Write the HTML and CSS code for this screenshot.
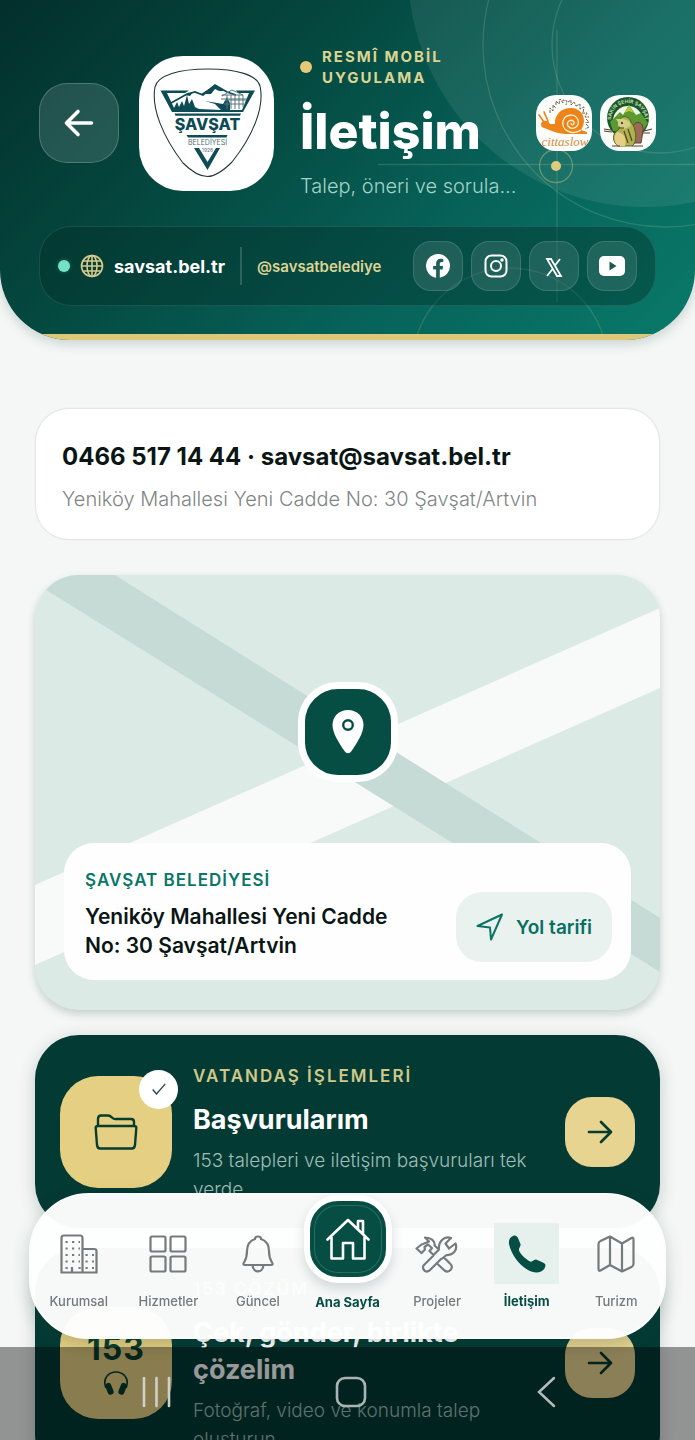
FILE: index.html
```html
<!DOCTYPE html>
<html lang="tr">
<head>
<meta charset="utf-8">
<meta name="viewport" content="width=device-width, initial-scale=1">
<title>İletişim – Şavşat Belediyesi</title>
<link rel="stylesheet" href="styles.css">
</head>
<body>
<div class="app">
  <header class="header">
    <svg class="header-art" width="320" height="338" viewBox="375 0 320 338" fill="none" aria-hidden="true">
      <circle cx="645" cy="-30" r="237" fill="#fff" fill-opacity=".08"/>
      <g stroke="#cfe0a8" stroke-opacity=".17" stroke-width="1.3">
        <circle cx="665" cy="45" r="182"/>
        <circle cx="660" cy="45" r="108"/>
        <circle cx="510" cy="366" r="98"/>
        <path d="M378 164.500H695M557 30V302"/>
      </g>
      <circle cx="556" cy="166" r="16.500" stroke="#dccb7f" stroke-opacity=".4" stroke-width="1.300"/>
      <circle cx="556" cy="166" r="5" fill="#e0cb7c"/>
    </svg>
    <div class="header-top">
      <button class="back" type="button" aria-label="Geri">
        <svg width="32" height="32" viewBox="0 0 32 32" fill="none" stroke="#fff" stroke-width="3.6" stroke-linecap="round" stroke-linejoin="round"><path d="M28.500 16H4M15 4.500 3.500 16 15 27.500"/></svg>
      </button>
      <div class="crest">
        <svg width="135" height="135" viewBox="4 5 135 135" role="img" aria-label="Şavşat Belediyesi">
          <path d="M73 18C102 18 122 24 125 35C130 57 117 86 97 111C87 121 79 125.500 72.500 125.500C66 125.500 57 121 48 112C28 86 16 57 20 36C23 24 44 18 73 18Z" fill="#fff" stroke="#20393c" stroke-width="1.100"/>
          <path d="M25.500 39.500H54L50 42H32L40 59H107L114 42H103L101 39.500H120L108 61H37Z" fill="#0d4b55"/>
          <path d="M36 52 52 43 60 41 68 44 80 34 92 41 101 44" fill="none" stroke="#0d4b55" stroke-width="1.800"/>
          <path d="M66 43 80 34 89 40 84 40 80 38 76 43ZM50 44 58 41 55 45ZM36 59V54L39 57 42 51 44 56 47 50 49 55 52 44 54 53 57 48 60 56 64 58 86 59 80 53 70 50 88 53 92 46 95 52 95 60H38Z" fill="#0d4b55"/>
          <g fill="none" stroke="#58797d" stroke-width="1"><path d="M87 45 97 39 108 44H87ZM92 44V58M96 44V58M100 44V58M104 44V58M108 44V56M90 49H111M89 53H109M86 48H112"/></g>
          <path d="M39.500 62.500H106L105 64.800H40.500ZM51.500 84H92.500L91.300 86.500H53Z" fill="#0d4b55"/>
          <text class="crest-name" x="72.500" y="78.500" text-anchor="middle">ŞAVŞAT</text>
          <text class="crest-sub" x="72.500" y="93.500" text-anchor="middle">BELEDİYESİ</text>
          <text class="crest-year" x="72.500" y="100.500" text-anchor="middle">1926</text>
          <path d="M59 97H64L72.500 111 81 97H85L72.500 119Z" fill="#0d4b55"/>
        </svg>
      </div>
      <div class="heading">
        <p class="eyebrow"><span class="gold-dot"></span><span>RESMÎ MOBİL UYGULAMA</span></p>
        <h1>İletişim</h1>
        <p class="lead">Talep, öneri ve sorula...</p>
      </div>
      <div class="partners">
        <span class="partner">
          <svg width="56" height="56" viewBox="0 0 56 56" role="img" aria-label="Cittaslow">
            <g fill="none" stroke="#765b45" stroke-width="1"><path d="M14 18V13L17 16V10L20 13M20 10V6L23 9 24 4 27 8V5L31 6 30 10M32 7 35 5V10L38 7 40 11M40 11 44 9V14L48 12 47 18M46 18H51L49 22H53M50 24 53 27 49 28M50 29 53 32 49 34" stroke-dasharray="3 1"/></g>
            <path d="M8 27 3 20M12 26 8 17" stroke="#ee8418" stroke-width="1.700" stroke-linecap="round"/>
            <path d="M6 27C8 25 12 25 14 29L19 29C18 19 27 12 36 13C48 14 51 27 45 35L51 37V39H30C23 39 16 36 8 33C5 32 4 29 6 27Z" fill="#ee8418"/>
            <path d="M45 35C36 41 25 35 27 26C29 19 39 18 42 25C44 32 36 36 32 31C30 27 35 23 38 27C39 30 35 31 35 28" fill="none" stroke="#fff0d7" stroke-width="1.300"/>
            <text class="cittaslow" x="29" y="51" text-anchor="middle">cittaslow</text>
          </svg>
        </span>
        <span class="partner">
          <svg width="56" height="56" viewBox="0 0 56 56" role="img" aria-label="Sakin şehir">
            <circle cx="28" cy="23" r="21" fill="#17572b"/>
            <circle cx="28" cy="26" r="15" fill="#f1f6e6"/>
            <path d="M10 27 20 17 23 20 29 10 36 20 41 18 48 28 43 36H13Z" fill="#5a9a31"/>
            <path d="M24 18 29 10 34 18 29 16Z" fill="#b7c943"/>
            <path id="badge-arc" d="M11 25A17 17 0 0 1 45 25" fill="none"/>
            <text class="badge-text"><textPath href="#badge-arc" startOffset="50%" text-anchor="middle">SAKİN ŞEHİR ŞAVŞAT</textPath></text>
            <path d="M33 31C37 24 44 28 43 36L41 48H30Z" fill="#9d6b55" stroke="#5b4234"/>
            <path d="M20 26C20 20 29 20 31 27 36 32 38 48 32 51H18C12 47 12 38 18 35L20 32Z" fill="#aeb34d" stroke="#556126"/>
            <path d="M17 37C13 42 14 49 19 51H25C27 43 24 38 17 37Z" fill="#e4cf84"/>
            <path d="M18 27 16 24H23L29 26 31 31 24 34 18 31Z" fill="#d2cf86"/>
            <circle cx="22" cy="28" r="1" fill="#222"/>
            <path d="M4 34 11 35M4 36 12 37M44 36 52 34M43 38 50 38M12 51H20M32 51H43M24 36 28 48M28 34 32 46M19 33 24 33" stroke="#54412e" stroke-width="1.200"/>
          </svg>
        </span>
      </div>
    </div>
    <div class="linkbar">
      <span class="live-dot"></span>
      <a class="site" href="#web">
        <svg width="24" height="24" viewBox="0 0 24 24" fill="none" stroke="#d6cb8a" stroke-width="1.600" aria-hidden="true"><circle cx="12" cy="12" r="10.500"/><ellipse cx="12" cy="12" rx="5" ry="10.500"/><path d="M12 1.500V22.500M1.500 12H22.500M3 7H21M3 17H21"/></svg>
        <span>savsat.bel.tr</span>
      </a>
      <span class="divider"></span>
      <a class="handle" href="#sosyal">@savsatbelediye</a>
      <div class="socials">
        <a class="social" href="#facebook" aria-label="Facebook"><svg width="24" height="24" viewBox="0 0 24 24" fill="#fff"><path d="M24 12a12 12 0 1 0-13.900 11.850v-8.400H7.100V12h3V9.400c0-3 1.800-4.700 4.500-4.700 1.300 0 2.700.25 2.700.25v2.950h-1.500c-1.500 0-2 .93-2 1.880V12h3.350l-.55 3.450h-2.800v8.400A12 12 0 0 0 24 12Z"/></svg></a>
        <a class="social" href="#instagram" aria-label="Instagram"><svg width="24" height="24" viewBox="0 0 24 24" fill="none" stroke="#fff" stroke-width="2"><rect x="1.500" y="1.500" width="21" height="21" rx="6"/><circle cx="12" cy="12" r="5"/><circle cx="18" cy="6" r=".8" fill="#fff"/></svg></a>
        <a class="social" href="#x" aria-label="X"><svg width="24" height="24" viewBox="0 0 24 24" fill="none" stroke="#fff"><path d="M5 5H9L19 22H15ZM18 5 12.600 12M11 14.500 5 22" stroke-width="1.800"/></svg></a>
        <a class="social" href="#youtube" aria-label="YouTube"><svg width="26" height="20" viewBox="0 0 26 20"><rect width="26" height="20" rx="5" fill="#fff"/><path d="M10.500 5.500 17.500 10 10.500 14.500Z" fill="#175a51"/></svg></a>
      </div>
    </div>
  </header>

  <main class="content">
    <section class="contact">
      <h2>0466 517 14 44 · savsat@savsat.bel.tr</h2>
      <p>Yeniköy Mahallesi Yeni Cadde No: 30 Şavşat/Artvin</p>
    </section>

    <section class="map">
      <svg class="roads" viewBox="0 0 626 435" preserveAspectRatio="none" aria-hidden="true">
        <path d="M0 310 626 33V113L0 390Z" fill="#f8faf9"/>
        <path d="M-20-18 80 0 626 343V397L0 8Z" fill="#c6dbd6"/>
      </svg>
      <span class="pin">
        <svg width="32" height="44" viewBox="0 0 32 44" aria-hidden="true"><path d="M16 0C7 0 .5 6.500.5 15C.5 23 7 33 12.500 41C14.500 44 17.500 44 19.500 41C25 33 31.500 23 31.500 15C31.500 6.500 25 0 16 0Z" fill="#fff"/><circle cx="16" cy="15" r="4.800" fill="none" stroke="#064e44" stroke-width="2.400"/></svg>
      </span>
      <div class="place">
        <div class="place-text">
          <h3>ŞAVŞAT BELEDİYESİ</h3>
          <p>Yeniköy Mahallesi Yeni Cadde No: 30 Şavşat/Artvin</p>
        </div>
        <button class="route" type="button">
          <svg width="28" height="28" viewBox="0 0 28 28" fill="none" stroke="#0a7565" stroke-width="2" stroke-linejoin="round" aria-hidden="true"><path d="M26 1.500 1.500 13 14 14.500 15 26.500Z"/></svg>
          <span>Yol tarifi</span>
        </button>
      </div>
    </section>

    <a class="action" href="#basvurularim">
      <span class="tile">
        <svg width="44" height="36" viewBox="0 0 44 36" fill="none" stroke="#063d2f" stroke-width="2.400" stroke-linejoin="round" aria-hidden="true"><path d="M4 12V5Q4 1.500 7 1.500H14Q16 1.500 18 3.500T22 5H37Q40 5 40 8V12M4 12H40Q42.500 12 42.300 14L41 31Q40.500 34.500 38 34.500H6Q3.500 34.500 3 31L1.700 14Q1.500 12 4 12Z"/></svg>
        <span class="check"><svg width="14" height="12" viewBox="0 0 14 12" fill="none" stroke="#25443f" stroke-width="1.300" aria-hidden="true"><path d="M.7 6.500 4.500 11 13.300.800"/></svg></span>
      </span>
      <span class="action-text">
        <span class="kicker">VATANDAŞ İŞLEMLERİ</span>
        <strong>Başvurularım</strong>
        <span class="desc">153 talepleri ve iletişim başvuruları tek yerde</span>
      </span>
      <span class="go"><svg width="26" height="26" viewBox="0 0 26 26" fill="none" stroke="#063d2f" stroke-width="2.700" stroke-linecap="round" stroke-linejoin="round" aria-hidden="true"><path d="M2 13H24M14 3 24 13 14 23"/></svg></span>
    </a>

    <a class="action" href="#cozum">
      <span class="tile">
        <b>153</b>
        <svg width="24" height="26" viewBox="0 0 24 26" aria-hidden="true"><path d="M2 17C-2 7 5 1 12 1S26 7 22 17" fill="none" stroke="#063d2f" stroke-width="1.600"/><rect x="2.500" y="12" width="6" height="12" rx="2.800" transform="rotate(-22 5 18)" fill="#063d2f"/><rect x="15.500" y="12" width="6" height="12" rx="2.800" transform="rotate(22 19 18)" fill="#063d2f"/></svg>
      </span>
      <span class="action-text">
        <span class="kicker">153 ÇÖZÜM</span>
        <strong>Çek, gönder, birlikte çözelim</strong>
        <span class="desc">Fotoğraf, video ve konumla talep oluşturun</span>
      </span>
      <span class="go"><svg width="26" height="26" viewBox="0 0 26 26" fill="none" stroke="#063d2f" stroke-width="2.700" stroke-linecap="round" stroke-linejoin="round" aria-hidden="true"><path d="M2 13H24M14 3 24 13 14 23"/></svg></span>
    </a>
  </main>

  <div class="dock">
    <nav class="tabs">
      <a class="tab" href="#kurumsal"><span class="tab-icon"><svg width="38" height="40" viewBox="0 0 38 40" fill="none" stroke="#747b7a" stroke-width="2.200"><path d="M1.500 38.500V4Q1.500 1.500 4 1.500H20Q22.500 1.500 22.500 4V38.500ZM22.500 15H34Q36.500 15 36.500 17V38.500H22.500M12 38V33"/><path d="M5.500 8H20M5.500 14.500H20M5.500 21H20M5.500 27.500H20M5.500 34H8M18.500 34H21M25.500 21H34M25.500 27.500H34M25.500 34H34" stroke-dasharray="2.200 4.300" stroke-width="2.200"/></svg></span><span>Kurumsal</span></a>
      <a class="tab" href="#hizmetler"><span class="tab-icon"><svg width="38" height="38" viewBox="0 0 38 38" fill="none" stroke="#747b7a" stroke-width="2.200"><rect x="1.500" y="1.500" width="15" height="15" rx="1.500"/><rect x="21.500" y="1.500" width="15" height="15" rx="1.500"/><rect x="1.500" y="21.500" width="15" height="15" rx="1.500"/><rect x="21.500" y="21.500" width="15" height="15" rx="1.500"/></svg></span><span>Hizmetler</span></a>
      <a class="tab" href="#guncel"><span class="tab-icon"><svg width="32" height="38" viewBox="0 0 32 38" fill="none" stroke="#747b7a" stroke-width="2.200" stroke-linejoin="round"><path d="M13 4Q13 1.500 16 1.500T19 4C25 6 27 10 27 16C27 23 28.500 25 30 27.500Q31.500 30 29 30H3Q.5 30 2 27.500C3.500 25 5 23 5 16C5 10 7 6 13 4ZM10.500 30C11 38.500 21 38.500 21.500 30"/></svg></span><span>Güncel</span></a>
      <a class="tab home" href="#ana-sayfa"><span class="home-icon"><svg width="46" height="44" viewBox="0 0 46 44" fill="none" stroke="#fff" stroke-width="2.600" stroke-linejoin="round" stroke-linecap="round"><path d="M2.500 22.500 23 3 43.500 22.500M6.500 20V41.500H18V26H28V41.500H39.500V20M33 12V4H38V16.500"/></svg></span><span>Ana Sayfa</span></a>
      <a class="tab" href="#projeler"><span class="tab-icon"><svg width="44" height="38" viewBox="0 0 44 38" fill="none" stroke="#747b7a" stroke-width="2.200" stroke-linejoin="round"><path d="M1.500 13.500 6.500 18 10 14.500 9.500 12 13 9.500 17 13 14.500 16 18.500 20 24 14.500 19.500 10.500C20.500 6 16 2.500 10 2.500L14 6.500 8 9 6.500 9.500ZM19 20 8.500 30.500Q7 34 10 36 13 37.500 15.500 34.500L26.500 23.500M24 14.500C23 7 29 .5 36 3L30.500 8.500 34 13.500 40.500 8.500C43 15 38 20.500 31.500 20L26.500 24M21.500 28 29.500 35.500Q33 38 36 34.500 38 31 35 28.500L29 22.500"/></svg></span><span>Projeler</span></a>
      <a class="tab active" href="#iletisim" aria-current="page"><span class="tab-icon"><svg width="38" height="38" viewBox="0 0 38 38" fill="#064e44"><path d="M5 1C7 0 9 1 10 3L12.500 9C13 11.500 10.500 13 11 15.500C13 20 17.500 24 22 26.500C24 27.500 26 24.500 28 24.500C30 25 34 27 36.500 28.500C38 29.500 37.500 31.500 36.500 33.500C33 39 25 38 20 35C11 30 3 19 1 9C.5 5 2 2 5 1Z"/></svg></span><span>İletişim</span></a>
      <a class="tab" href="#turizm"><span class="tab-icon"><svg width="38" height="38" viewBox="0 0 38 38" fill="none" stroke="#747b7a" stroke-width="2.200" stroke-linejoin="round"><path d="M1.500 9Q1.500 7 3.500 6L13 1.500 25 8.500 34.500 3Q36.500 2 36.500 4.500V29Q36.500 31 34.500 32L25 36.500 13 30 3.500 35.500Q1.500 36.500 1.500 34ZM13 1.500V30M25 8.500V36.500"/></svg></span><span>Turizm</span></a>
    </nav>
    <div class="system">
      <button type="button" aria-label="Son uygulamalar"><svg width="30" height="32" viewBox="0 0 30 32" stroke="#d0cfc9" stroke-width="2.600" stroke-linecap="round"><path d="M2 2V30M14.500 2V30M27 2V30"/></svg></button>
      <button type="button" aria-label="Ana ekran"><svg width="32" height="32" viewBox="0 0 32 32" fill="none" stroke="#aab5b3" stroke-width="2.600"><rect x="2" y="2" width="28" height="28" rx="8"/></svg></button>
      <button type="button" aria-label="Geri dön"><svg width="26" height="32" viewBox="0 0 26 32" fill="none" stroke="#b5bfbd" stroke-width="2.400" stroke-linecap="round"><path d="M24 2 9 16 24 30"/></svg></button>
    </div>
  </div>
</div>
</body>
</html>
```
FILE: styles.css
```css
* { box-sizing: border-box; }

body {
  margin: 0;
  background: #f4f7f6;
  color: #0a1614;
  font-family: Inter, "Noto Sans", sans-serif;
}

h1, h2, h3, p { margin: 0; }
a { color: inherit; text-decoration: none; }
button { border: 0; padding: 0; font: inherit; color: inherit; background: none; }
svg { display: block; flex: none; }

.app {
  height: 100vh;
  display: flex;
  flex-direction: column;
  overflow: hidden;
}

/* Header */
.header {
  position: relative;
  flex: none;
  display: flex;
  flex-direction: column;
  gap: 26px;
  padding: 46px 39px 34px;
  border-radius: 0 0 70px 70px;
  background: linear-gradient(135deg, #032f2c 0%, #04483f 34%, #07635a 66%, #097a69 100%);
  box-shadow: 0 4px 12px rgba(10, 50, 45, .18);
  overflow: hidden;
}
.header::after {
  content: "";
  position: absolute;
  left: 0;
  right: 0;
  bottom: 0;
  height: 6px;
  background: #dcc878;
}
.header-art { position: absolute; right: 0; top: 0; }
.header-top { position: relative; display: flex; align-items: center; }

.back {
  flex: none;
  display: grid;
  place-items: center;
  width: 80px;
  height: 80px;
  margin-right: 20px;
  border: 1px solid rgba(255, 255, 255, .2);
  border-radius: 28px;
  background: rgba(255, 255, 255, .13);
}
.crest {
  flex: none;
  margin-right: 26px;
  border-radius: 44px;
  background: #fff;
  overflow: hidden;
}
.crest-name { font: 800 16px Inter, sans-serif; fill: #0d4b55; }
.crest-sub { font: 400 7px Inter, sans-serif; fill: #4d6e72; }
.crest-year { font: 400 5px Inter, sans-serif; fill: #4d6e72; }

.heading { flex: 1; min-width: 0; }
.eyebrow {
  display: flex;
  align-items: center;
  gap: 10px;
  margin-bottom: 10px;
  color: #dcd493;
  font-size: 15px;
  font-weight: 700;
  line-height: 21px;
  letter-spacing: 2px;
}
.gold-dot { flex: none; width: 12px; height: 12px; border-radius: 50%; background: #e6c978; }
h1 {
  margin-bottom: 8px;
  color: #fff;
  font-size: 50px;
  font-weight: 800;
  line-height: 66px;
}
.lead { color: #a3d3c9; font-size: 20px; font-weight: 300; line-height: 28px; white-space: nowrap; }

.partners { flex: none; display: flex; gap: 8px; }
.partner { border-radius: 20px; background: #fbfdfa; overflow: hidden; }
.cittaslow { font: italic 13px "Liberation Serif", serif; fill: #d88a3d; }
.badge-text { font: 700 5px Inter, sans-serif; fill: #c5dba6; }

.linkbar {
  position: relative;
  display: flex;
  align-items: center;
  height: 80px;
  padding: 0 18px;
  border: 1px solid rgba(255, 255, 255, .1);
  border-radius: 32px;
  background: rgba(3, 45, 40, .4);
}
.live-dot {
  width: 12px;
  height: 12px;
  margin-right: 10px;
  border-radius: 50%;
  background: #74e0c4;
  box-shadow: 0 0 4px rgba(116, 224, 196, .3);
}
.site { display: flex; align-items: center; gap: 10px; color: #fff; font-size: 18px; font-weight: 700; }
.divider { width: 2px; height: 38px; margin: 0 15px; background: rgba(255, 255, 255, .17); }
.handle { color: #dcd493; font-size: 15px; font-weight: 600; }
.socials { display: flex; gap: 8px; margin-left: auto; }
.social {
  display: grid;
  place-items: center;
  width: 50px;
  height: 50px;
  border: 1px solid rgba(255, 255, 255, .13);
  border-radius: 18px;
  background: rgba(255, 255, 255, .1);
}

/* Content */
.content {
  flex: 1;
  min-height: 0;
  overflow: hidden;
  padding: 68px 35px 0;
}
.contact {
  margin-bottom: 35px;
  padding: 30px 26px 24px;
  border: 1px solid #e3e7e6;
  border-radius: 34px;
  background: #fff;
  box-shadow: 0 0 2px rgba(0, 0, 0, .06);
}
.contact h2 { margin-bottom: 8px; font-size: 24px; font-weight: 700; line-height: 36px; }
.contact p { color: #808685; font-size: 20px; font-weight: 300; line-height: 32px; }

.map {
  position: relative;
  display: flex;
  flex-direction: column;
  align-items: center;
  justify-content: space-between;
  height: 435px;
  margin-bottom: 25px;
  padding: 107px 29px 30px;
  border-radius: 44px;
  background: #dbeae5;
  box-shadow: 0 4px 8px rgba(20, 50, 45, .2);
}
.roads { position: absolute; inset: 0; width: 100%; height: 100%; border-radius: 44px; }
.pin {
  position: relative;
  display: grid;
  place-items: center;
  width: 100px;
  height: 100px;
  border: 7px solid #fff;
  border-radius: 40px;
  background: #064e44;
}
.place {
  position: relative;
  display: flex;
  align-items: flex-end;
  justify-content: space-between;
  width: 100%;
  padding: 24px 19px 18px 21px;
  border-radius: 30px;
  background: #fefefe;
}
.place-text { flex: 0 1 320px; padding-bottom: 2px; }
.place h3 { margin-bottom: 8px; color: #0a7766; font-size: 17px; font-weight: 600; line-height: 27px; letter-spacing: 1px; }
.place p { font-size: 21px; font-weight: 600; line-height: 29px; }
.route {
  flex: none;
  display: flex;
  align-items: center;
  gap: 12px;
  height: 70px;
  padding: 0 20px;
  border-radius: 26px;
  background: #e9f2ef;
  color: #0a6f61;
  font-size: 19px;
  font-weight: 600;
}

.action {
  display: flex;
  align-items: center;
  margin-bottom: 20px;
  padding: 24px 25px;
  border-radius: 44px;
  background: #033b34;
  box-shadow: 0 4px 18px rgba(20, 50, 45, .2);
}
.tile {
  position: relative;
  flex: none;
  display: flex;
  flex-direction: column;
  align-items: center;
  justify-content: center;
  gap: 2px;
  width: 112px;
  height: 112px;
  margin-right: 21px;
  border-radius: 38px;
  background: #e5cf82;
}
.tile b { color: #063d2f; font-size: 32px; font-weight: 700; line-height: 40px; letter-spacing: 1px; }
.check {
  position: absolute;
  top: -6px;
  right: -6px;
  display: grid;
  place-items: center;
  width: 39px;
  height: 39px;
  border-radius: 50%;
  background: #fff;
}
.action-text { flex: 1; min-width: 0; }
.action-text > * { display: block; }
.kicker { margin-bottom: 8px; color: #cfc889; font-size: 17px; font-weight: 600; line-height: 34px; letter-spacing: 2px; }
.action strong { max-width: 300px; margin-bottom: 8px; color: #fff; font-size: 27px; font-weight: 700; line-height: 37px; }
.desc { max-width: 345px; color: #9fbdb7; font-size: 19px; font-weight: 300; line-height: 29px; }
.go {
  flex: none;
  display: grid;
  place-items: center;
  width: 70px;
  height: 70px;
  border-radius: 27px;
  background: #e7d491;
}

.dock { position: fixed; left: 0; right: 0; bottom: 0; display: flex; flex-direction: column; gap: 8px; }
.tabs {
  display: flex;
  height: 146px;
  margin: 0 29px;
  padding: 0 3px;
  border: 2px solid #fbfdfc;
  border-radius: 60px;
  background: rgba(253, 254, 254, .975);
  box-shadow: 0 6px 18px rgba(20, 50, 45, .2);
}
.tab {
  flex: 1 1 0;
  display: flex;
  flex-direction: column;
  align-items: center;
  padding-top: 28px;
  color: #737a79;
  font-size: 13px;
  font-weight: 500;
  line-height: 18px;
}
.tab-icon { display: grid; place-items: center; width: 65px; height: 61px; margin-bottom: 8px; }
.active { color: #064e44; font-weight: 700; }
.active .tab-icon { background: #e6f1ee; }
.home { padding-top: 0; color: #064e44; font-weight: 700; white-space: nowrap; }
.home-icon {
  display: grid;
  place-items: center;
  width: 88px;
  height: 88px;
  margin-bottom: 10px;
  border: 6px solid #fff;
  border-radius: 34px;
  background: #064e44;
  box-shadow: inset 0 0 0 4px #064e44, inset 0 0 0 5px #2a6b60, 0 6px 12px rgba(20, 50, 45, .16);
}
.system {
  display: flex;
  align-items: center;
  justify-content: space-between;
  height: 93px;
  padding: 0 139px 4px 142px;
  background: rgba(0, 0, 0, .4);
}
```
